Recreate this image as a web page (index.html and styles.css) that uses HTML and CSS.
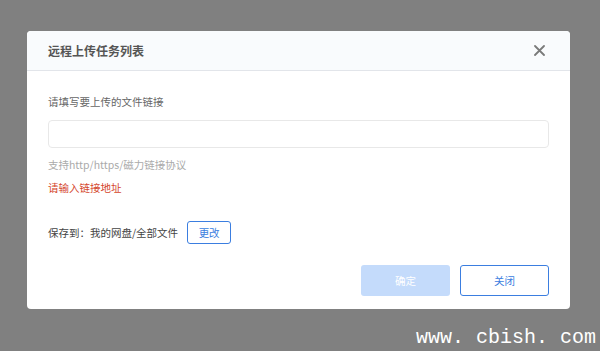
FILE: index.html
```html
<!DOCTYPE html>
<html lang="zh-CN">
<head>
  <meta charset="UTF-8">
  <title>远程上传任务列表</title>
  <link rel="stylesheet" href="styles.css">
</head>
<body>
  <div class="mask">
    <div class="dialog">
      <div class="dialog-head">
        <span class="dialog-title">远程上传任务列表</span>
        <span class="dialog-close">
          <svg width="11" height="11" viewBox="0 0 11 11"><path d="M1 1L10 10M10 1L1 10" stroke="#7a7a7a" stroke-width="1.8" stroke-linecap="round"/></svg>
        </span>
      </div>
      <div class="dialog-body">
        <div class="label">请填写要上传的文件链接</div>
        <input type="text" class="link-input">
        <div class="hint">支持http/https/磁力链接协议</div>
        <div class="error">请输入链接地址</div>
        <div class="save-row">
          <span>保存到：我的网盘/全部文件</span>
          <button class="btn-small">更改</button>
        </div>
      </div>
      <div class="dialog-foot">
        <button class="btn btn-ok">确定</button>
        <button class="btn btn-close">关闭</button>
      </div>
    </div>
    <div class="watermark">www. cbish. com</div>
  </div>
</body>
</html>
```
FILE: styles.css
```css
body {
  margin: 0;
  background: #808080;
  font-family: "Noto Sans CJK SC", "Liberation Sans", sans-serif;
}
.mask {
  width: 600px;
  height: 351px;
  padding: 31px 0 0 27px;
  box-sizing: border-box;
  position: relative;
}
.dialog {
  width: 543px;
  height: 278px;
  background: #fff;
  border-radius: 4px;
  overflow: hidden;
  display: flex;
  flex-direction: column;
}
.dialog-head {
  height: 39px;
  background: #f9fbfd;
  border-bottom: 1px solid #e2e5ea;
  display: flex;
  align-items: center;
  justify-content: space-between;
  padding: 0 25px 0 21px;
}
.dialog-title {
  font-size: 12px;
  font-weight: bold;
  color: #555;
}
.dialog-close {
  display: flex;
}
.dialog-body {
  padding: 22px 21px 0 21px;
  font-size: 10.5px;
}
.label {
  color: #666;
  line-height: 18px;
}
.link-input {
  display: block;
  box-sizing: border-box;
  width: 501px;
  height: 28px;
  margin-top: 9px;
  border: 1px solid #e8e8e8;
  border-radius: 4px;
  outline: none;
}
.hint {
  color: #aaa;
  margin-top: 8px;
  line-height: 18px;
}
.error {
  color: #d4452b;
  margin-top: 5px;
  line-height: 18px;
}
.save-row {
  display: flex;
  align-items: center;
  margin-top: 24px;
  color: #444;
}
.btn-small {
  margin-left: 9px;
  width: 44px;
  height: 23px;
  border: 1px solid #3b7ee0;
  border-radius: 3px;
  background: #fff;
  color: #3b7ee0;
  font-size: 10.5px;
  font-family: inherit;
  padding: 0;
}
.dialog-foot {
  display: flex;
  justify-content: flex-end;
  gap: 10px;
  padding: 21px 21px 0 0;
}
.btn {
  width: 89px;
  height: 31px;
  border-radius: 3px;
  font-size: 10.5px;
  font-family: inherit;
  padding: 0;
}
.btn-ok {
  background: #c4dbfb;
  border: none;
  color: #fff;
}
.btn-close {
  background: #fff;
  border: 1px solid #3b7ee0;
  color: #3b7ee0;
}
.watermark {
  position: absolute;
  right: 4px;
  bottom: 2px;
  color: #fff;
  font-family: "Liberation Mono", monospace;
  font-size: 20px;
  white-space: pre;
}
```
